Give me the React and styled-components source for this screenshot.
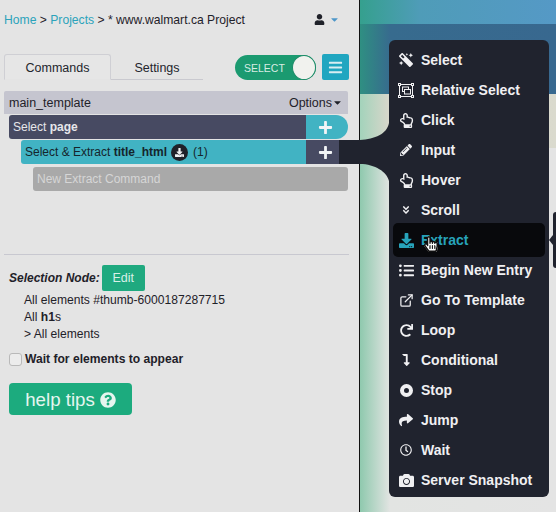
import styled, { createGlobalStyle } from "styled-components";
import { ExternalLink } from "lucide-react";
import {
  FaBars,
  FaCamera,
  FaCaretDown,
  FaDownload,
  FaHandPointer,
  FaLevelDownAlt,
  FaListUl,
  FaMagic,
  FaPencilAlt,
  FaPlus,
  FaQuestionCircle,
  FaRedo,
  FaRegClock,
  FaRegHandPointer,
  FaRegHandPointUp,
  FaShare,
  FaUser,
  FaAngleDoubleDown,
} from "react-icons/fa";

const GlobalStyle = createGlobalStyle`
  html, body {
    margin: 0;
    padding: 0;
    background: #e4e4e4;
    font-family: "Liberation Sans", Arial, sans-serif;
    color: #1f2129;
  }
`;

const Page = styled.div`
  position: relative;
  display: flex;
  width: 556px;
  height: 512px;
  overflow: hidden;
`;

const LeftPanel = styled.div`
  box-sizing: border-box;
  width: 360px;
  height: 100%;
  padding: 0 10px 0 4px;
  background: #e4e4e4;
  border-right: 1px solid #111;
`;

const TopBar = styled.div`
  display: flex;
  align-items: center;
  justify-content: space-between;
  height: 39px;
  padding-right: 9px;
  font-size: 12.15px;
`;

const Crumbs = styled.div`
  white-space: nowrap;
`;

const CrumbLink = styled.span`
  color: #2ba3bb;
`;

const UserMenu = styled.div`
  display: flex;
  align-items: center;
  gap: 4px;
  font-size: 11px;
  color: #1f2129;
  svg:last-child {
    color: #4d97c9;
    font-size: 11px;
  }
`;

const TabRow = styled.div`
  display: flex;
  align-items: flex-end;
  height: 26px;
  margin-top: 15px;
`;

const Tabs = styled.div`
  display: flex;
  width: 199px;
  height: 26px;
  border-bottom: 1px solid #c9c9cf;
  box-sizing: border-box;
`;

const Tab = styled.div`
  box-sizing: border-box;
  display: flex;
  align-items: center;
  justify-content: center;
  width: ${(p) => (p.$active ? "108px" : "93px")};
  height: ${(p) => (p.$active ? "26px" : "25px")};
  padding-top: 2px;
  font-size: 12.5px;
  color: #23252c;
  ${(p) =>
    p.$active &&
    `
    border: 1px solid #cfcfd4;
    border-bottom: 1px solid #e4e4e4;
    border-radius: 3px 3px 0 0;
    background: #e6e6e6;
  `}
`;

const Toggle = styled.div`
  box-sizing: border-box;
  display: flex;
  align-items: center;
  justify-content: space-between;
  width: 81px;
  height: 25px;
  margin-left: 32px;
  padding: 0 0 0 9px;
  border-radius: 13px;
  background: #1b9a70;
  color: #d8ece4;
  font-size: 10.5px;
`;

const Knob = styled.div`
  box-sizing: border-box;
  width: 24px;
  height: 25px;
  border-radius: 50%;
  background: #f1f2ee;
  border: 1px solid #1b8a66;
`;

const MenuButton = styled.div`
  display: flex;
  align-items: center;
  justify-content: center;
  width: 27px;
  height: 26px;
  margin-left: 6px;
  border-radius: 2px;
  background: #20a6c0;
  color: #d9eef2;
  font-size: 15px;
`;

const Commands = styled.div`
  display: flex;
  flex-direction: column;
  gap: 1px;
  margin-top: 11px;
  margin-right: 1px;
`;

const TemplateRow = styled.div`
  display: flex;
  align-items: center;
  justify-content: space-between;
  height: 23px;
  padding: 0 5px;
  border-radius: 2px 2px 0 0;
  background: #c5c5cf;
  font-size: 12.5px;
`;

const Options = styled.span`
  display: flex;
  align-items: center;
  svg {
    font-size: 11px;
    margin-left: 0;
  }
`;

const CommandRow = styled.div`
  display: flex;
  height: 24px;
  margin-left: ${(p) => p.$indent}px;
  margin-right: ${(p) => p.$trim || 0}px;
`;

const CommandLabel = styled.div`
  flex: 1;
  display: flex;
  align-items: center;
  padding-left: 4px;
  border-radius: 3px 0 0 3px;
  background: ${(p) => p.$bg};
  color: ${(p) => p.$fg};
  font-size: 12px;
  white-space: pre;
`;

const AddButton = styled.div`
  display: flex;
  align-items: center;
  justify-content: center;
  width: ${(p) => p.$width}px;
  padding-right: ${(p) => p.$padRight || 0}px;
  padding-left: ${(p) => p.$padLeft || 0}px;
  box-sizing: border-box;
  background: ${(p) => p.$bg};
  color: #f2f4f6;
  font-size: 15px;
  border-radius: ${(p) => (p.$round ? "0 12px 12px 0" : "0")};
`;

const ExtractBadge = styled.span`
  display: inline-flex;
  align-items: center;
  justify-content: center;
  width: 17px;
  height: 17px;
  margin: 0 5px 0 4px;
  border-radius: 50%;
  background: #1f2129;
  color: #eef0f2;
  font-size: 9px;
`;

const NewCommand = styled.div`
  display: flex;
  align-items: center;
  height: 24px;
  margin: 2px 0 0 29px;
  padding-left: 4px;
  border-radius: 3px;
  background: #a9a9a9;
  color: #d6d6d6;
  font-size: 12px;
`;

const Divider = styled.div`
  height: 1px;
  margin-top: 63px;
  background: #c8c8d0;
`;

const SelectionHead = styled.div`
  display: flex;
  align-items: center;
  gap: 2px;
  margin: 10px 0 0 5px;
  font-size: 12px;
  font-weight: bold;
  font-style: italic;
`;

const EditButton = styled.div`
  display: flex;
  align-items: center;
  justify-content: center;
  width: 43px;
  height: 26px;
  border-radius: 2px;
  background: #1fa97f;
  color: #d9f0e8;
  font-size: 12.5px;
  font-weight: normal;
  font-style: normal;
`;

const NodeList = styled.div`
  display: flex;
  flex-direction: column;
  margin: 1px 0 0 20px;
  font-size: 12.1px;
  line-height: 17px;
`;

const WaitRow = styled.label`
  display: flex;
  align-items: center;
  gap: 3px;
  margin: 9px 0 0 5px;
  font-size: 12.1px;
  font-weight: bold;
`;

const CheckBox = styled.span`
  box-sizing: border-box;
  width: 13px;
  height: 13px;
  border: 1px solid #b9b9b9;
  border-radius: 3px;
  background: #ececec;
`;

const HelpButton = styled.div`
  display: flex;
  align-items: center;
  justify-content: center;
  gap: 5px;
  box-sizing: border-box;
  width: 123px;
  height: 32px;
  margin: 17px 0 0 5px;
  padding-top: 2px;
  border-radius: 4px;
  background: #1cab7e;
  color: #e6f5ef;
  font-size: 18.7px;
  svg {
    font-size: 16px;
  }
`;

const RightPane = styled.div`
  flex: 1;
  display: flex;
  flex-direction: column;
`;

const Band = styled.div`
  height: ${(p) => (p.$height ? `${p.$height}px` : "auto")};
  flex: ${(p) => (p.$height ? "none" : 1)};
  background: ${(p) => p.$bg};
`;

const Connector = styled.svg`
  position: absolute;
  left: 339px;
  top: 120px;
`;

const ActionMenu = styled.div`
  position: absolute;
  left: 389px;
  top: 40px;
  box-sizing: border-box;
  width: 160px;
  height: 457px;
  padding: 5px 6px;
  border-radius: 6px;
  background: #20232e;
`;

const ActionItem = styled.div`
  display: flex;
  align-items: center;
  height: 30px;
  border-radius: 3px;
  color: ${(p) => (p.$active ? "#27a3ba" : "#f0f0f2")};
  background: ${(p) => (p.$active ? "#08090c" : "transparent")};
  box-shadow: ${(p) => (p.$active ? "0 0 0 2px #08090c" : "none")};
  font-size: 14px;
  font-weight: bold;
  white-space: nowrap;
`;

const ActionIcon = styled.span`
  display: flex;
  align-items: center;
  justify-content: center;
  width: 22px;
  margin-right: 4px;
  font-size: ${(p) => p.$size || 14}px;
  transform: ${(p) => (p.$flip ? "scaleX(-1)" : "none")};
`;

const StopRing = styled.span`
  box-sizing: border-box;
  width: 13px;
  height: 13px;
  border: 4px solid #f0f0f2;
  border-radius: 50%;
`;

const Pointer = styled.span`
  position: absolute;
  left: 423px;
  top: 236px;
  width: 13px;
  height: 17px;
  font-size: 16px;
  line-height: 0;
  svg {
    position: absolute;
    left: 0;
    top: 0;
  }
  svg:first-child {
    color: #fff;
  }
  svg:last-child {
    color: #111;
  }
`;

const SideTip = styled.div`
  position: absolute;
  left: 553px;
  top: 212px;
  width: 6px;
  height: 56px;
  border-radius: 3px 0 0 3px;
  background: #20232e;
  &::before {
    content: "";
    position: absolute;
    left: -4px;
    top: 23px;
    border: 5px solid transparent;
    border-left: 0;
    border-right: 4px solid #20232e;
  }
`;

// selection box with corner handles, no icon package has this one
const RelativeIcon = () => (
  <svg width="16" height="15" viewBox="0 0 16 15" fill="none" stroke="#f0f0f2">
    <rect x="1.5" y="1.5" width="13" height="12" strokeWidth="1" />
    <rect x="4.5" y="4" width="6" height="4.5" strokeWidth="1" />
    <rect x="6.5" y="6.5" width="6" height="4.5" strokeWidth="1" fill="#20232e" />
    <g fill="#20232e" strokeWidth="1">
      <rect x="0.5" y="0.5" width="2" height="2" />
      <rect x="13.5" y="0.5" width="2" height="2" />
      <rect x="0.5" y="12.5" width="2" height="2" />
      <rect x="13.5" y="12.5" width="2" height="2" />
    </g>
  </svg>
);

const actions = [
  { label: "Select", icon: <FaMagic />, flip: true },
  { label: "Relative Select", icon: <RelativeIcon /> },
  { label: "Click", icon: <FaRegHandPointUp />, size: 15 },
  { label: "Input", icon: <FaPencilAlt />, size: 12 },
  { label: "Hover", icon: <FaRegHandPointUp />, size: 15 },
  { label: "Scroll", icon: <FaAngleDoubleDown />, size: 10 },
  { label: "Extract", icon: <FaDownload />, size: 15, active: true },
  { label: "Begin New Entry", icon: <FaListUl />, size: 15 },
  { label: "Go To Template", icon: <ExternalLink size={15} strokeWidth={2} /> },
  { label: "Loop", icon: <FaRedo />, size: 13 },
  { label: "Conditional", icon: <FaLevelDownAlt />, size: 12 },
  { label: "Stop", icon: <StopRing /> },
  { label: "Jump", icon: <FaShare /> },
  { label: "Wait", icon: <FaRegClock />, size: 12 },
  { label: "Server Snapshot", icon: <FaCamera />, size: 15 },
];

export default function App() {
  return (
    <Page>
      <GlobalStyle />
      <LeftPanel>
        <TopBar>
          <Crumbs>
            <CrumbLink>Home</CrumbLink> &gt; <CrumbLink>Projects</CrumbLink> &gt; * www.walmart.ca Project
          </Crumbs>
          <UserMenu>
            <FaUser />
            <FaCaretDown />
          </UserMenu>
        </TopBar>

        <TabRow>
          <Tabs>
            <Tab $active>Commands</Tab>
            <Tab>Settings</Tab>
          </Tabs>
          <Toggle>
            SELECT
            <Knob />
          </Toggle>
          <MenuButton>
            <FaBars />
          </MenuButton>
        </TabRow>

        <Commands>
          <TemplateRow>
            main_template
            <Options>
              Options
              <FaCaretDown />
            </Options>
          </TemplateRow>
          <CommandRow $indent={5}>
            <CommandLabel $bg="#474a62" $fg="#e6e6ea">
              Select <b>page</b>
            </CommandLabel>
            <AddButton $width={42} $padRight={4} $bg="#41b3c3" $round>
              <FaPlus />
            </AddButton>
          </CommandRow>
          <CommandRow $indent={17} $trim={9}>
            <CommandLabel $bg="#41b3c3" $fg="#15252c">
              Select &amp; Extract <b>title_html</b>
              <ExtractBadge>
                <FaDownload />
              </ExtractBadge>
              (1)
            </CommandLabel>
            <AddButton $width={33} $padLeft={5} $bg="#474a62">
              <FaPlus />
            </AddButton>
          </CommandRow>
          <NewCommand>New Extract Command</NewCommand>
        </Commands>

        <Divider />

        <SelectionHead>
          Selection Node:
          <EditButton>Edit</EditButton>
        </SelectionHead>
        <NodeList>
          <span>All elements #thumb-6000187287715</span>
          <span>
            All <b>h1</b>s
          </span>
          <span>&gt; All elements</span>
        </NodeList>

        <WaitRow>
          <CheckBox />
          Wait for elements to appear
        </WaitRow>

        <HelpButton>
          help tips
          <FaQuestionCircle />
        </HelpButton>
      </LeftPanel>

      <RightPane>
        <Band $height={24} $bg="linear-gradient(90deg, #35a08e 0, #4f9cb8 60px, #5599c6 100%)" />
        <Band $height={70} $bg="linear-gradient(90deg, #2f8f82 0, #376b8e 30px, #38688f 100%)" />
        <Band $height={54} $bg="linear-gradient(90deg, #a3d3bb 0, #d6d6ca 28px, #dadace 100%)" />
        <Band $bg="linear-gradient(90deg, #8fc9ae 0, #e2e4e2 30px, #e4e4e4 100%)" />
      </RightPane>

      <Connector width="50" height="70" viewBox="0 0 50 70">
        <path
          d="M0 20 H21 C36 19 48 14 50 3 V61 C48 52 36 44 21 44 H0 Z"
          fill="#20232e"
        />
      </Connector>

      <ActionMenu>
        {actions.map((item) => (
          <ActionItem key={item.label} $active={item.active}>
            <ActionIcon $size={item.size} $flip={item.flip}>
              {item.icon}
            </ActionIcon>
            {item.label}
          </ActionItem>
        ))}
      </ActionMenu>

      <Pointer>
        <FaHandPointer />
        <FaRegHandPointer />
      </Pointer>
      <SideTip />
    </Page>
  );
}
